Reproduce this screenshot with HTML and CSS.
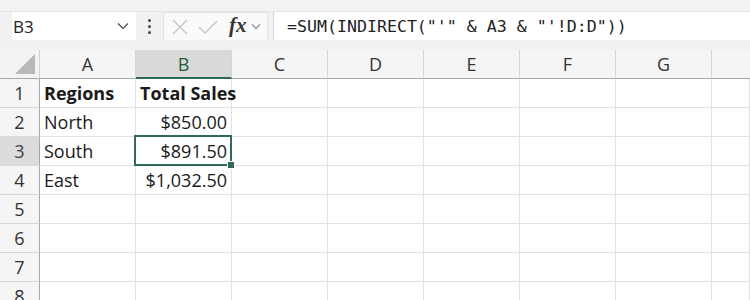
FILE: index.html
```html
<!DOCTYPE html>
<html lang="en">
<head>
    <meta charset="UTF-8">
    <title>Sheet - Total Sales</title>
    <link rel="stylesheet" href="styles.css">
</head>
<body>
    <div class="top-strip"></div>

    <!-- Formula bar -->
    <div class="formula-bar">
        <div class="name-box">
            <span>B3</span>
            <svg class="chev" width="12" height="8" viewBox="0 0 12 8"><path d="M1 1.5 L6 6.5 L11 1.5" fill="none" stroke="#444" stroke-width="1.2"/></svg>
        </div>
        <div class="grip">
            <span></span><span></span><span></span>
        </div>
        <div class="fx-box">
            <svg width="18" height="18" viewBox="0 0 18 18"><path d="M2 2 L16 16 M16 2 L2 16" stroke="#c4c4c4" stroke-width="1.3"/></svg>
            <svg width="20" height="18" viewBox="0 0 20 18"><path d="M1 9 L7 15 L19 3" fill="none" stroke="#c4c4c4" stroke-width="1.3"/></svg>
            <span class="fx">fx</span>
            <svg class="chev-sm" width="10" height="7" viewBox="0 0 10 7"><path d="M1 1.5 L5 5.5 L9 1.5" fill="none" stroke="#888" stroke-width="1.1"/></svg>
        </div>
        <div class="formula">=SUM(INDIRECT("'" &amp; A3 &amp; "'!D:D"))</div>
    </div>

    <!-- Sheet grid -->
    <div class="sheet">
        <div class="corner"><div class="tri"></div></div>
        <div class="col-head">A</div>
        <div class="col-head active">B</div>
        <div class="col-head">C</div>
        <div class="col-head">D</div>
        <div class="col-head">E</div>
        <div class="col-head">F</div>
        <div class="col-head">G</div>
        <div class="col-head last"></div>

        <div class="row-head">1</div>
        <div class="cell bold">Regions</div>
        <div class="cell bold">Total Sales</div>
        <div class="cell"></div><div class="cell"></div><div class="cell"></div><div class="cell"></div><div class="cell"></div><div class="cell"></div>

        <div class="row-head">2</div>
        <div class="cell">North</div>
        <div class="cell num">$850.00</div>
        <div class="cell"></div><div class="cell"></div><div class="cell"></div><div class="cell"></div><div class="cell"></div><div class="cell"></div>

        <div class="row-head active">3</div>
        <div class="cell">South</div>
        <div class="cell num selected">$891.50</div>
        <div class="cell"></div><div class="cell"></div><div class="cell"></div><div class="cell"></div><div class="cell"></div><div class="cell"></div>

        <div class="row-head">4</div>
        <div class="cell">East</div>
        <div class="cell num">$1,032.50</div>
        <div class="cell"></div><div class="cell"></div><div class="cell"></div><div class="cell"></div><div class="cell"></div><div class="cell"></div>

        <div class="row-head">5</div>
        <div class="cell"></div><div class="cell"></div><div class="cell"></div><div class="cell"></div><div class="cell"></div><div class="cell"></div><div class="cell"></div><div class="cell"></div>

        <div class="row-head">6</div>
        <div class="cell"></div><div class="cell"></div><div class="cell"></div><div class="cell"></div><div class="cell"></div><div class="cell"></div><div class="cell"></div><div class="cell"></div>

        <div class="row-head">7</div>
        <div class="cell"></div><div class="cell"></div><div class="cell"></div><div class="cell"></div><div class="cell"></div><div class="cell"></div><div class="cell"></div><div class="cell"></div>

        <div class="row-head">8</div>
        <div class="cell"></div><div class="cell"></div><div class="cell"></div><div class="cell"></div><div class="cell"></div><div class="cell"></div><div class="cell"></div><div class="cell"></div>
    </div>
</body>
</html>
```

FILE: styles.css
```css
/* Basic page */
body {
    margin: 0;
    background-color: #f1f1f1;
    font-family: "Open Sans", "Liberation Sans", sans-serif;
    color: #1a1a1a;
    overflow: hidden;
}

.top-strip {
    height: 11px;
    background-color: #f3f3f3;
    border-bottom: 1px solid #e4e4e4;
}

/* Formula bar */
.formula-bar {
    display: flex;
    align-items: stretch;
    height: 28px;
    padding-left: 12px;
}

.name-box {
    width: 124px;
    box-sizing: border-box;
    background-color: #fff;
    display: flex;
    align-items: center;
    justify-content: space-between;
    padding: 0 7px 0 0;
    font-size: 17px;
    color: #222;
}

.name-box span {
    margin-left: 1px;
}

.grip {
    width: 27px;
    display: flex;
    flex-direction: column;
    align-items: center;
    justify-content: center;
    gap: 3px;
}

.grip span {
    width: 3px;
    height: 3px;
    background-color: #444;
    border-radius: 50%;
}

.fx-box {
    width: 105px;
    box-sizing: border-box;
    background-color: #fafafa;
    border: 1px solid #e2e2e2;
    border-bottom: none;
    display: flex;
    align-items: center;
    gap: 9px;
    padding-left: 7px;
}

.fx {
    font-family: "Liberation Serif", serif;
    font-style: italic;
    font-weight: 700;
    font-size: 21px;
    color: #333;
    margin-left: 2px;
    margin-top: -3px;
}

.chev-sm {
    margin-left: -5px;
}

.formula {
    flex: 1;
    margin-left: 5px;
    background-color: #fff;
    border-left: 1px solid #d6d6d6;
    font-family: "DejaVu Sans Mono", "Liberation Mono", monospace;
    font-size: 16.6px;
    display: flex;
    align-items: center;
    padding-left: 13px;
    color: #222;
}

/* Sheet */
.sheet {
    margin-top: 10px;
    display: grid;
    grid-template-columns: 40px repeat(7, 96px) 1fr;
    grid-template-rows: 29px repeat(8, 29px);
    background-color: #fff;
    font-size: 18px;
}

.corner {
    background-color: #f3f3f3;
    border-right: 1px solid #d4d4d4;
    border-bottom: 1px solid #a8a8a8;
    position: relative;
}

.tri {
    position: absolute;
    right: 4px;
    bottom: 4px;
    width: 0;
    height: 0;
    border-left: 20px solid transparent;
    border-bottom: 20px solid #b8b8b8;
}

.col-head {
    background-color: #f5f5f5;
    border-right: 1px solid #d4d4d4;
    border-bottom: 1px solid #a8a8a8;
    display: flex;
    align-items: center;
    justify-content: center;
    color: #333;
    font-size: 18px;
}

.col-head.active {
    background-color: #d9d9d9;
    border-bottom: 2px solid #2d6b4f;
    color: #1f5e3f;
}

.col-head.last {
    border-right: none;
}

.row-head {
    background-color: #f5f5f5;
    border-right: 1px solid #a8a8a8;
    border-bottom: 1px solid #d8d8d8;
    display: flex;
    align-items: center;
    justify-content: center;
    color: #333;
}

.row-head.active {
    background-color: #dcdcdc;
    color: #444;
}

.cell {
    border-right: 1px solid #e1e1e1;
    border-bottom: 1px solid #e1e1e1;
    display: flex;
    align-items: center;
    padding: 0 4px;
    white-space: nowrap;
    overflow: visible;
}

.cell.bold {
    font-weight: 700;
}

.cell.num {
    justify-content: flex-end;
}

/* Active cell outline and fill handle */
.cell.selected {
    position: relative;
}

.cell.selected::after {
    content: "";
    position: absolute;
    left: -2px;
    top: -2px;
    right: -1px;
    bottom: -1px;
    border: 2px solid #2f6b56;
}

.cell.selected::before {
    content: "";
    position: absolute;
    right: -4px;
    bottom: -4px;
    width: 6px;
    height: 6px;
    background-color: #2f6b56;
    border: 1px solid #fff;
    z-index: 1;
}
```
